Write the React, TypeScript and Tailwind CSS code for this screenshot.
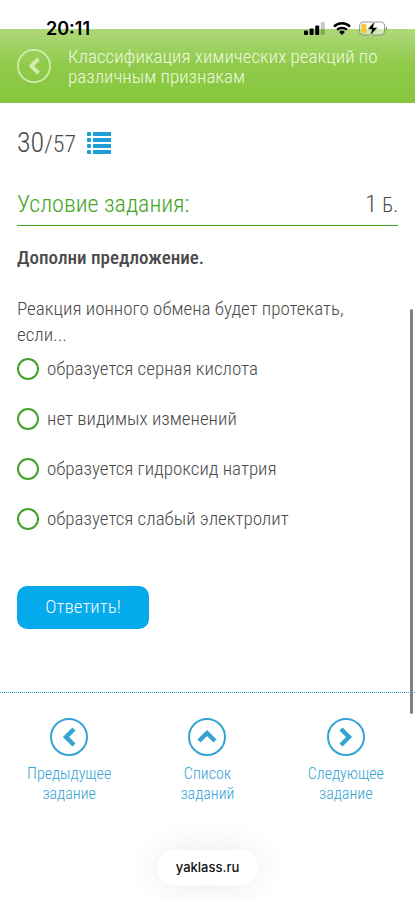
import { useState } from "react";

const answers = [
  "образуется серная кислота",
  "нет видимых изменений",
  "образуется гидроксид натрия",
  "образуется слабый электролит",
];

const chevrons = {
  left: "M24 11 L16 19 L24 27",
  up: "M11 23 L19 15 L27 23",
  right: "M14 11 L22 19 L14 27",
};

function CircleArrow({ direction, className }: { direction: keyof typeof chevrons; className: string }) {
  return (
    <svg viewBox="0 0 38 38" fill="none" stroke="currentColor" className={className} aria-hidden="true">
      <circle cx="19" cy="19" r="18" strokeWidth="2" />
      <path d={chevrons[direction]} strokeWidth="4.4" />
    </svg>
  );
}

function StatusBar() {
  return (
    <div className="absolute inset-x-0 top-0 z-10 flex h-14 items-center justify-between pr-[27px] pl-[46px]">
      <span className="font-[Inter,sans-serif] text-[18px] font-semibold text-black">20:11</span>
      <div className="flex items-center gap-2">
        <svg viewBox="0 0 21 13" className="h-[13px] w-[21px]" aria-hidden="true">
          <rect x="0" y="8.5" width="4" height="4.5" rx="1" />
          <rect x="5.6" y="6.5" width="4" height="6.5" rx="1" />
          <rect x="11.2" y="3.5" width="4" height="9.5" rx="1" />
          <rect x="16.8" y="0" width="4" height="13" rx="1" fill="#000" fillOpacity="0.22" />
        </svg>
        <svg viewBox="0 0 18 13" className="h-[13px] w-[18px]" fill="none" stroke="#000" aria-hidden="true">
          <path d="M1 4.6 A11.4 11.4 0 0 1 17 4.6" strokeWidth="2.4" />
          <path d="M4 7.8 A7.2 7.2 0 0 1 14 7.8" strokeWidth="2.2" />
          <path d="M9 13 L6.1 10 A4.2 4.2 0 0 1 11.9 10 Z" fill="#000" stroke="none" />
        </svg>
        <svg viewBox="0 0 29 15" className="h-[15px] w-[29px]" aria-hidden="true">
          <rect x="0.6" y="1" width="25" height="13" rx="4" fill="#fff" fillOpacity="0.45" stroke="#777b70" strokeOpacity="0.75" strokeWidth="1.1" />
          <rect x="2.3" y="2.8" width="5" height="9.4" rx="2" fill="#fbc52d" />
          <path d="M27 5.3 Q29 7.5 27 9.7 Z" fill="#74796f" />
          <path d="M15.8 0 L8.4 8.4 H12.6 L11 15 L18.8 6.4 H14.3 Z" fill="#000" stroke="#e5f0d0" strokeWidth="0.7" />
        </svg>
      </div>
    </div>
  );
}

export default function App() {
  const [selected, setSelected] = useState<number | null>(null);

  return (
    <div className="relative flex min-h-screen flex-col bg-white font-['Roboto_Condensed','Liberation_Sans_Narrow',Roboto,sans-serif] font-light text-[#4a4a4a]">
      <StatusBar />

      <header className="mt-[29px] flex h-[74px] items-start bg-linear-to-b from-[#aed878] via-[#8fca49] via-50% to-[#87c63c] pt-[18px] pr-6 pl-[17px] text-[#eef8df]">
        <button type="button" aria-label="Назад" className="mt-0.5 shrink-0 text-[#d3ecae]">
          <CircleArrow direction="left" className="size-[34px]" />
        </button>
        <h1 className="ml-[17px] text-[19px] leading-5">Классификация химических реакций по различным признакам</h1>
      </header>

      <main className="px-[17px] pt-6">
        <div className="flex items-center gap-[11px]">
          <p className="text-[28px] leading-8">
            30<span className="text-[24px]">/57</span>
          </p>
          <button type="button" aria-label="Список заданий" className="text-[#1f9fd8]">
            <svg viewBox="0 0 24 24" fill="currentColor" className="size-6" aria-hidden="true">
              {[0, 6, 12, 18].map((y) => (
                <g key={y}>
                  <rect x="0" y={y} width="4" height="4" rx="1" />
                  <rect x="6" y={y} width="18" height="4" />
                </g>
              ))}
            </svg>
          </button>
        </div>

        <div className="mt-7 flex h-[38px] items-start justify-between border-b border-b-[#43a51f]">
          <h2 className="text-[24px] leading-8 text-[#43a51f]">Условие задания:</h2>
          <p className="text-[24px] leading-8">
            1 <span className="text-[20px]">Б.</span>
          </p>
        </div>

        <p className="mt-[19px] text-[19px] leading-[26px] font-medium">Дополни предложение.</p>
        <form className="mt-[25px]" onSubmit={(event) => event.preventDefault()}>
          <fieldset>
            <legend className="pr-6 text-[19px] leading-[26px]">Реакция ионного обмена будет протекать, если...</legend>
            <div className="mt-[9px] flex flex-col gap-[27px]">
              {answers.map((answer, index) => (
                <label key={answer} className="flex items-center gap-2 text-[19px] leading-[23px]">
                  <input
                    type="radio"
                    name="answer"
                    checked={selected === index}
                    onChange={() => setSelected(index)}
                    className="size-[22px] shrink-0 appearance-none rounded-full border-2 border-[#43a22a] bg-white checked:bg-[#43a22a]"
                  />
                  {answer}
                </label>
              ))}
            </div>
          </fieldset>
          <button type="submit" className="mt-[56px] h-[43px] w-[132px] rounded-[10px] bg-[#05aaed] text-[19px] text-[#f0faff]">
            Ответить!
          </button>
        </form>
      </main>

      <nav className="mt-[63px] grid grid-cols-3 border-t border-dotted border-t-[#1f9fd8] pt-[25px] text-center text-[16px] leading-5 text-[#35a3d3]">
        <a href="#previous" className="flex flex-col items-center gap-2">
          <CircleArrow direction="left" className="size-[38px]" />
          <span>Предыдущее<br />задание</span>
        </a>
        <a href="#list" className="flex flex-col items-center gap-2">
          <CircleArrow direction="up" className="size-[38px]" />
          <span>Список<br />заданий</span>
        </a>
        <a href="#next" className="flex flex-col items-center gap-2">
          <CircleArrow direction="right" className="size-[38px]" />
          <span>Следующее<br />задание</span>
        </a>
      </nav>

      <div className="mt-auto flex justify-center pb-[15px]">
        <button type="button" className="h-[35px] rounded-full bg-white px-[19px] font-[Inter,sans-serif] text-[13px] font-medium text-[#101010] shadow-[0_0_28px_6px_rgba(0,0,0,0.06)]">
          yaklass.ru
        </button>
      </div>

      <div className="absolute top-[309px] right-[2px] h-[405px] w-[3px] rounded-full bg-[#808080]" />
    </div>
  );
}
